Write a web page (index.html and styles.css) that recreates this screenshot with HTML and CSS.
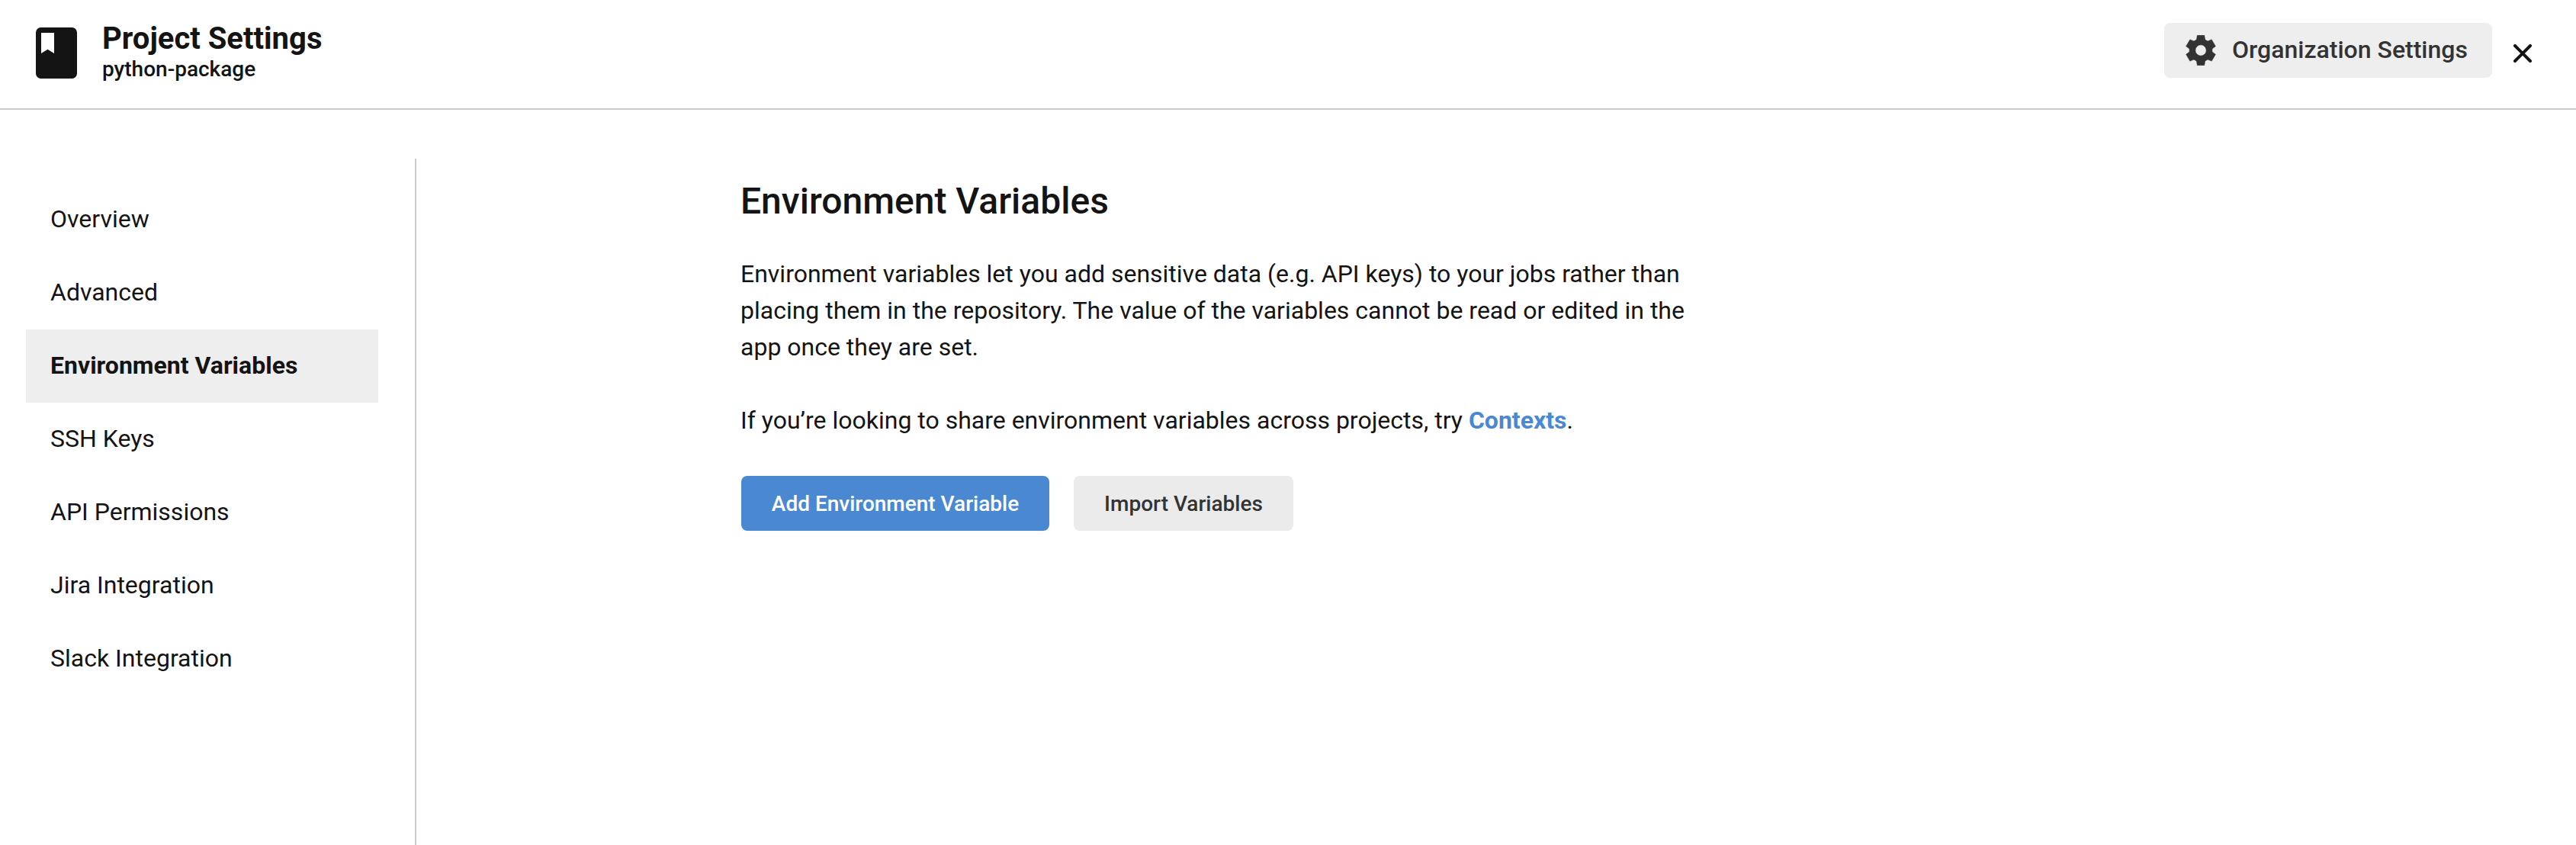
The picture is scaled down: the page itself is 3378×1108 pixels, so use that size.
FILE: index.html
```html
<!DOCTYPE html>
<html lang="en">
<head>
<meta charset="utf-8">
<title>Project Settings</title>
<link rel="stylesheet" href="styles.css">
</head>
<body>
<header class="header">
  <svg class="book-icon" viewBox="0 0 54 67" aria-hidden="true">
    <path fill="#141414" fill-rule="evenodd" d="M6.500 0h41a6.500 6.700 0 0 1 6.500 6.700v53.600a6.500 6.700 0 0 1-6.500 6.700h-41a6.500 6.700 0 0 1-6.500-6.700v-53.600a6.500 6.700 0 0 1 6.500-6.700zM7 7v27l8.500-5.200 8.500 5.200v-27z"/>
  </svg>
  <div class="titles">
    <h1 class="title">Project Settings</h1>
    <p class="project">python-package</p>
  </div>
  <button class="button org-button" type="button">
    <svg class="gear-icon" viewBox="-20 -20 40 40" aria-hidden="true">
      <path fill="#333" fill-rule="evenodd" stroke="#333" stroke-width=".6" stroke-linejoin="round" d="M-4.600-19.700L4.600-19.700L5.600-14L9.100-12L14.200-14.100L19.300-5.300L14.900-2V2L19.300 5.300L14.200 14.100L9.100 12L5.600 14L4.600 19.700H-4.600L-5.600 14L-9.100 12L-14.200 14.100L-19.300 5.300L-14.900 2V-2L-19.300-5.300L-14.200-14.100L-9.100-12L-5.600-14zM-7.200 0a7.200 7.200 0 1 0 14.400 0a7.200 7.200 0 1 0-14.400 0z"/>
    </svg>
    <span>Organization Settings</span>
  </button>
  <button class="close" type="button" aria-label="Close">
    <svg class="close-icon" viewBox="0 0 24 24" aria-hidden="true">
      <path d="M2 2l20 20M22 2l-20 20" fill="none" stroke="#141414" stroke-width="4" stroke-linecap="round"/>
    </svg>
  </button>
</header>
<div class="layout">
  <nav class="sidebar">
    <a class="nav-item">Overview</a>
    <a class="nav-item">Advanced</a>
    <a class="nav-item active">Environment Variables</a>
    <a class="nav-item">SSH Keys</a>
    <a class="nav-item">API Permissions</a>
    <a class="nav-item">Jira Integration</a>
    <a class="nav-item">Slack Integration</a>
  </nav>
  <main class="main">
    <h2 class="heading">Environment Variables</h2>
    <p class="text">Environment variables let you add sensitive data (e.g. API keys) to your jobs rather than<br>placing them in the repository. The value of the variables cannot be read or edited in the<br>app once they are set.</p>
    <p class="text">If you’re looking to share environment variables across projects, try <a class="link">Contexts</a>.</p>
    <div class="actions">
      <button class="button primary" type="button">Add Environment Variable</button>
      <button class="button" type="button">Import Variables</button>
    </div>
  </main>
</div>
</body>
</html>
```

FILE: styles.css
```css
* { box-sizing: border-box; margin: 0; padding: 0; }

body {
  display: flex;
  flex-direction: column;
  height: 1108px;
  overflow: hidden;
  background: #fff;
  color: #141414;
  font-family: Roboto, sans-serif;
  font-size: 32px;
  line-height: 48px;
}

.header {
  display: flex;
  align-items: flex-start;
  flex: none;
  height: 144px;
  padding: 0 58px 0 47px;
  border-bottom: 2px solid #ccc;
}

.book-icon { width: 54px; height: 67px; margin-top: 36px; }
.titles { margin: 27px auto 0 33px; white-space: nowrap; }
.title { font-size: 40px; font-weight: 700; line-height: 47px; }
.project { font-size: 28px; font-weight: 500; line-height: 33px; }

.button {
  display: flex;
  align-items: flex-start;
  justify-content: center;
  width: 288px;
  height: 72px;
  padding-top: 20px;
  border: 0;
  border-radius: 8px;
  background: #ebebeb;
  color: #333;
  font: 500 28px/33px Roboto, sans-serif;
  white-space: nowrap;
}

.org-button {
  justify-content: flex-start;
  width: 430px;
  margin-top: 30px;
  padding: 16px 0 0 28px;
  gap: 21px;
  background: #eee;
  font-size: 32px;
  line-height: 38px;
}

.gear-icon { width: 40px; height: 40px; }

.close { margin: 58px 0 0 28px; border: 0; background: none; }
.close-icon { display: block; width: 24px; height: 24px; }

.layout { display: flex; flex: 1; }

.sidebar {
  width: 546px;
  margin-top: 64px;
  padding: 32px 48px 0 34px;
  border-right: 2px solid #ccc;
}

.nav-item { display: block; height: 96px; padding: 23px 32px; white-space: nowrap; }
.nav-item.active { background: #eee; font-weight: 700; }

.main { margin-left: 425px; padding-top: 87px; white-space: nowrap; }
.heading { margin-bottom: 39px; font-size: 48px; font-weight: 500; line-height: 65px; }
.text { margin-bottom: 48px; }
.link { color: #4a89d1; font-weight: 700; }
.actions { display: flex; gap: 32px; margin: 49px 0 0 1px; }
.primary { width: 404px; background: #4a89d1; color: #fff; }
```
